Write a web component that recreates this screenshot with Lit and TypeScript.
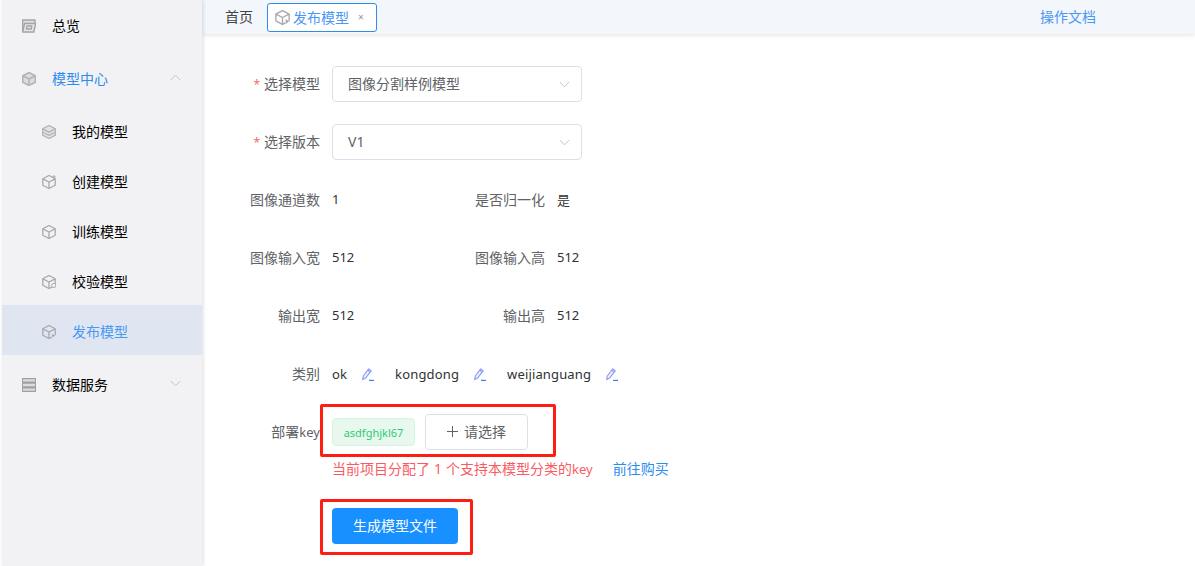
import { LitElement, html, css, svg } from "lit";
import { customElement } from "lit/decorators.js";

const cube = (extra: unknown = null, size = 14) => html`<svg class="ic" width=${size} height=${size} viewBox="1 1 14 14" fill="none" stroke="#a9a9ad" stroke-width="1.3" stroke-linejoin="round"><path d="M8 1.5 14.2 4.8V11.2L8 14.5 1.8 11.2V4.8Z"/><path d="M1.8 4.8 8 8 14.2 4.8M8 8V14.5"/>${extra}</svg>`;
const cubeFill = html`<svg class="ic" width="14" height="14" viewBox="1 1 14 14" fill="none" stroke="#b4b4b8" stroke-width="1.6" stroke-linejoin="round"><path d="M8 1.5 14.2 4.8V11.2L8 14.5 1.8 11.2V4.8Z" fill="#dcdce0"/><path d="M1.8 4.8 8 8 14.2 4.8M8 8V14.5" /></svg>`;
const cubeFlat = html`<svg class="ic" width="14" height="14" viewBox="1 1 14 14" fill="none" stroke="#b4b4b8" stroke-width="1.3" stroke-linejoin="round"><path d="M8 1.5 14.5 4.8V11.2L8 14.5 1.5 11.2V4.8Z" fill="#e2e2e6"/><path d="M1.5 4.8 8 8.2 14.5 4.8M1.5 8 8 11.3 14.5 8"/></svg>`;
const plusMark = svg`<path d="M13 1.2V4.6M11.3 2.9H14.7" stroke-width="1"/>`;
const gearMark = svg`<circle cx="12.8" cy="11.5" r="2.1" fill="#f2f2f5" stroke-width="1"/>`;
const arrowMark = svg`<path d="M10.5 9.5 14.5 11.5 12.6 12.4 11.8 14.5Z" fill="#8f8f94" stroke="#f2f2f5" stroke-width=".6"/>`;

const folder = html`<svg class="ic" width="14" height="14" viewBox="1 1 14 14" fill="none" stroke="#a4a4a8" stroke-width="1.4" stroke-linejoin="round"><path d="M1.6 14V2H14V5" fill="#dcdce0"/><path d="M1.6 14 3.6 5.5H14.6L12.8 14Z" fill="#e6e6ea"/><path d="M6 8H10.8L10.2 11H5.4Z"/></svg>`;
const server = html`<svg class="ic" width="14" height="14" viewBox="0 0 14 14"><rect x="0" y="0" width="14" height="14" fill="#a0a0a4"/><path d="M1 1.2H13V3.6H1ZM1 5.8H13V8.2H1ZM1 10.4H13V12.8H1Z" fill="#dcdce0"/></svg>`;
const chevron = (up: boolean, color = "#c0c4cc", w = 11) => html`<svg width=${w} height="7" viewBox="0 0 11 7" fill="none" stroke=${color} stroke-width="1"><path d=${up ? "M.8 6 5.5 1.2 10.2 6" : "M.8 1 5.5 5.8 10.2 1"}/></svg>`;
const pencil = html`<svg class="pencil" width="12" height="13" viewBox="0 0 12 13" fill="#f1f0ff" stroke="#8f9df2" stroke-width="1.2" stroke-linejoin="round"><path d="M.7 11.6 1.3 8 6.8.9 9.2 2.8 3.7 9.9Z"/><path d="M5.8 2.2 8.2 4.1" fill="none"/><path d="M7 12.4H12" stroke="#3a7fe6" fill="none"/></svg>`;

@customElement("app-root")
export class AppRoot extends LitElement {
  static styles = css`
    :host { display: block; width: 1195px; height: 566px; overflow: hidden; position: relative; background: #fff;
      font-family: "Noto Sans", "Noto Sans CJK SC", sans-serif; font-size: 14px; color: #606266; }
    .page { display: flex; height: 566px; padding-left: 2px; box-sizing: border-box; }
    .side { width: 200px; flex: none; background: #f2f2f5; box-shadow: 1px 0 4px rgba(0,0,0,.14); position: relative; z-index: 2; }
    .top, .sub { display: flex; align-items: center; color: #000; box-sizing: border-box; }
    .top { padding-left: 20px; gap: 16px; }
    .top .t { flex: 1; }
    .top .chev { display: flex; margin-right: 21px; margin-top: -4px; }
    .r1 { height: 52px; }
    .r2 { height: 53px; padding-top: 1px; }
    .r3 { height: 54px; padding-top: 2px; margin-top: 2px; }
    .blue { color: #2d8cf0; }
    .sub { height: 50px; padding: 3px 0 0 40px; gap: 16px; }
    .sub.on { background: #dfe6f2; color: #4a97f5; }
    .t, .s, .lab, .val, .home, .doc, .sel > span, .tab > span { padding-bottom: 2px; }
    .ic { flex: none; display: block; }
    .main { flex: 1; min-width: 0; display: flex; flex-direction: column; }
    .bar { height: 34px; flex: none; background: #f3f6fb; box-shadow: 0 1px 5px rgba(0,0,0,.12); display: flex; align-items: center; padding: 0 99px 0 23px; box-sizing: border-box; position: relative; }
    .home { color: #444; margin-right: 14px; }
    .tab { display: flex; align-items: center; height: 29px; margin-top: 1px; box-sizing: border-box; border: 1px solid #2d8cf0; border-radius: 3px; background: #fff; padding: 0 12px 0 7px; color: #4a97f5; gap: 3px; }
    .tab .x { color: #8a93a8; font-size: 10px; margin-left: 6px; }
    .doc { margin-left: auto; color: #4a97f5; }
    .form { padding: 21px 0 0 30px; display: flex; flex-direction: column; position: relative; }
    .row { display: flex; align-items: center; height: 58px; }
    .lab { width: 88px; text-align: right; margin-right: 12px; flex: none; white-space: nowrap; }
    .req { color: #f56c6c; margin-right: 4px; font-size: 12px; }
    .lat { font-size: 13px; }
    .sel { width: 250px; height: 36px; box-sizing: border-box; border: 1px solid #dcdfe6; border-radius: 4px; display: flex; align-items: center; justify-content: space-between; padding: 0 11px 0 15px; }
    .cell { display: flex; align-items: center; }
    .cell .val { width: 125px; color: #303133; font-size: 13px; }
    .cats { display: flex; align-items: center; color: #303133; font-size: 13px; letter-spacing: .15px; }
    .cats .pencil { margin-left: 15px; margin-right: 21px; }
    .keys { display: flex; align-items: center; gap: 10px; }
    .tag { height: 28px; box-sizing: border-box; width: 83px; border: 1px solid #d5f5e3; background: #e8f8ef; color: #2ecc71; font-size: 11px; border-radius: 4px; display: flex; align-items: center; justify-content: center; }
    .add { width: 103px; height: 36px; box-sizing: border-box; border: 1px solid #dcdfe6; border-radius: 4px; display: flex; align-items: center; justify-content: center; gap: 6px; color: #606266; padding-bottom: 2px; }
    .plus { width: 11px; height: 11px; }
    .hint { display: flex; align-items: center; margin: -4px 0 0 100px; height: 22px; color: #fb5a64; white-space: nowrap; padding-bottom: 2px; box-sizing: content-box; }
    .hint .link { color: #2d8cf0; margin-left: 20px; }
    .hint .n { margin: 0 4px; }
    .btnrow { margin: 27px 0 0 100px; }
    .btn { width: 126px; height: 36px; box-sizing: border-box; padding-bottom: 2px; border-radius: 4px; background: #1890ff; color: #fff; display: flex; align-items: center; justify-content: center; }
    .mark { position: absolute; box-sizing: border-box; border: 3px solid #ff1d12; border-radius: 2px; }
    .m1 { left: 320px; top: 404px; width: 236px; height: 53px; }
    .m2 { left: 320px; top: 499px; width: 153px; height: 56px; }
  `;

  render() {
    return html`
      <div class="page">
        <aside class="side">
          <div class="top r1">${folder}<span class="t">总览</span></div>
          <div class="top r2">${cubeFill}<span class="t blue">模型中心</span><span class="chev">${chevron(true)}</span></div>
          <div class="sub">${cubeFlat}<span class="s">我的模型</span></div>
          <div class="sub">${cube(plusMark)}<span class="s">创建模型</span></div>
          <div class="sub">${cube()}<span class="s">训练模型</span></div>
          <div class="sub">${cube(gearMark)}<span class="s">校验模型</span></div>
          <div class="sub on">${cube(arrowMark)}<span class="s">发布模型</span></div>
          <div class="top r3">${server}<span class="t">数据服务</span><span class="chev">${chevron(false)}</span></div>
        </aside>
        <main class="main">
          <header class="bar">
            <span class="home">首页</span>
            <span class="tab">${cube(arrowMark, 15)}<span>发布模型</span><span class="x">×</span></span>
            <span class="doc">操作文档</span>
          </header>
          <section class="form">
            <div class="row"><span class="lab"><span class="req">*</span>选择模型</span><div class="sel"><span>图像分割样例模型</span>${chevron(false)}</div></div>
            <div class="row"><span class="lab"><span class="req">*</span>选择版本</span><div class="sel"><span>V1</span>${chevron(false)}</div></div>
            <div class="row"><span class="lab">图像通道数</span><div class="cell"><span class="val">1</span><span class="lab">是否归一化</span><span class="val">是</span></div></div>
            <div class="row"><span class="lab">图像输入宽</span><div class="cell"><span class="val">512</span><span class="lab">图像输入高</span><span class="val">512</span></div></div>
            <div class="row"><span class="lab">输出宽</span><div class="cell"><span class="val">512</span><span class="lab">输出高</span><span class="val">512</span></div></div>
            <div class="row"><span class="lab">类别</span><div class="cats"><span>ok</span>${pencil}<span>kongdong</span>${pencil}<span>weijianguang</span>${pencil}</div></div>
            <div class="row"><span class="lab">部署<span class="lat">key</span></span><div class="keys"><span class="tag">asdfghjkl67</span><span class="add"><svg class="plus" viewBox="0 0 11 11" stroke="#606266" stroke-width="1"><path d="M5.5 0V11M0 5.5H11"/></svg>请选择</span></div></div>
            <div class="hint"><span>当前项目分配了<span class="n">1</span>个支持本模型分类的<span class="lat">key</span></span><span class="link">前往购买</span></div>
            <div class="btnrow"><div class="btn">生成模型文件</div></div>
          </section>
        </main>
      </div>
      <div class="mark m1"></div>
      <div class="mark m2"></div>
    `;
  }
}
